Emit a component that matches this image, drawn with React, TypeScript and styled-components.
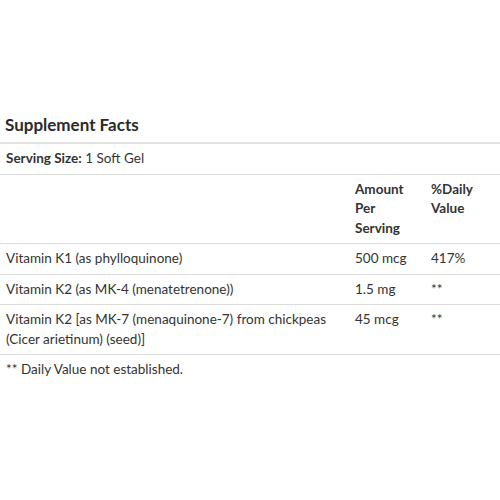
import React from "react";
import styled, { createGlobalStyle } from "styled-components";

const Global = createGlobalStyle`
  html, body { margin: 0; padding: 0; background: #fff; }
  body { font-family: Lato, "Open Sans", sans-serif; color: #333; }
`;

const Wrap = styled.div`
  width: 500px;
  padding-top: 114px;
`;

const Title = styled.h2`
  margin: 0;
  padding: 0 5px 6px;
  font-size: 17px;
  line-height: 22px;
  font-weight: 700;
  color: #2a2a2a;
  border-bottom: 2px solid #e2e2e2;
`;

const Table = styled.table`
  width: 500px;
  border-collapse: collapse;
  table-layout: fixed;
  font-size: 13.5px;
  line-height: 19.5px;
`;

const Cell = styled.td<{ $bold?: boolean }>`
  padding: 5px 6px 5px 6px;
  vertical-align: top;
  text-align: left;
  border-bottom: 1px solid #dcdcdc;
  font-weight: ${(p) => (p.$bold ? 700 : 400)};
`;

const Footnote = styled.p`
  margin: 0;
  padding: 5px 6px;
  font-size: 13.5px;
  line-height: 19.5px;
`;

const rows = [
  { name: "Vitamin K1 (as phylloquinone)", amt: "500 mcg", dv: "417%" },
  { name: "Vitamin K2 (as MK-4 (menatetrenone))", amt: "1.5 mg", dv: "**" },
  {
    name: "Vitamin K2 [as MK-7 (menaquinone-7) from chickpeas (Cicer arietinum) (seed)]",
    amt: "45 mcg",
    dv: "**",
  },
];

export default function App() {
  return (
    <Wrap>
      <Global />
      <Title>Supplement Facts</Title>
      <Table>
        <colgroup>
          <col style={{ width: 349 }} />
          <col style={{ width: 76 }} />
          <col style={{ width: 75 }} />
        </colgroup>
        <tbody>
          <tr>
            <Cell colSpan={3}>
              <b>Serving Size:</b> 1 Soft Gel
            </Cell>
          </tr>
          <tr>
            <Cell />
            <Cell $bold>Amount Per Serving</Cell>
            <Cell $bold>%Daily Value</Cell>
          </tr>
          {rows.map((r) => (
            <tr key={r.name}>
              <Cell>{r.name}</Cell>
              <Cell>{r.amt}</Cell>
              <Cell>{r.dv}</Cell>
            </tr>
          ))}
        </tbody>
      </Table>
      <Footnote>** Daily Value not established.</Footnote>
    </Wrap>
  );
}
